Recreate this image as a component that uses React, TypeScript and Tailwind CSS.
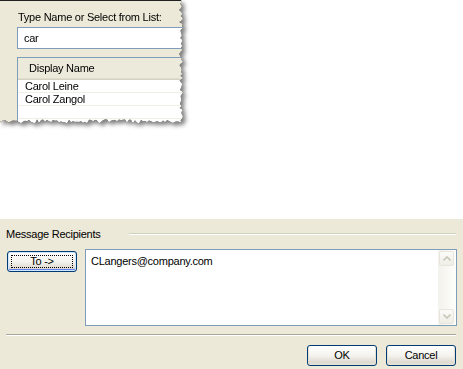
import React from 'react';

// pseudo-random jitter so the torn edge is the same on every render
const noise = (i: number) => {
  const s = Math.sin(i * 12.9898 + 78.233) * 43758.5453;
  return s - Math.floor(s);
};

function tornEdge(right: number, bottom: number) {
  const pts: string[] = ['0px 0px', `${right}px 0px`];
  for (let y = 2; y < bottom; y += 2) {
    pts.push(`${(right + (noise(y) - 0.5) * 4).toFixed(1)}px ${y}px`);
  }
  for (let x = right; x > 0; x -= 2) {
    pts.push(`${x}px ${(bottom + (noise(x + 500) - 0.5) * 4).toFixed(1)}px`);
  }
  pts.push(`0px ${bottom}px`);
  return `polygon(${pts.join(',')})`;
}

function XpButton({ label, focused = false }: { label: string; focused?: boolean }) {
  return (
    <button
      className={
        'relative w-[70px] h-[21px] rounded-[3px] border border-[#003C74] bg-gradient-to-b from-white via-[#F4F3EE] to-[#D6D0C5] text-[11px] text-black leading-none ' +
        (focused ? 'shadow-[inset_0_0_0_1px_#CEE7FF,inset_0_-1px_0_1px_#6982EE]' : 'shadow-[inset_0_-1px_0_1px_#E3E0D6]')
      }
    >
      {focused && <span className="absolute inset-[3px] border border-dotted border-black" />}
      <span className="relative">{label}</span>
    </button>
  );
}

function ScrollArrow({ up }: { up?: boolean }) {
  return (
    <div className="h-[15px] rounded-[2px] border border-[#E8E6DC] bg-gradient-to-b from-[#FBFBF8] to-[#EEEDE6] flex items-center justify-center">
      <svg width="8" height="5" viewBox="0 0 8 5">
        <path
          d={up ? 'M0.5 4.5 L4 1 L7.5 4.5' : 'M0.5 0.5 L4 4 L7.5 0.5'}
          fill="none"
          stroke="#C9C7BA"
          strokeWidth="1.6"
        />
      </svg>
    </div>
  );
}

export default function App() {
  return (
    <div className="w-[463px] h-[369px] bg-white font-['Liberation_Sans',Arial,sans-serif] text-[11px] tracking-[-0.25px] text-black">
      {/* torn clipping of the name picker */}
      <div className="h-[219px]">
        <div className="w-[190px] [filter:drop-shadow(0_0_0.6px_#000)_drop-shadow(3px_3px_2px_rgba(0,0,0,0.5))]">
          <div
            className="w-[186px] h-[126px] overflow-hidden bg-[#ECE9D8] border-t border-[#222] pl-[17px]"
            style={{ clipPath: tornEdge(181, 121) }}
          >
            <div className="pt-[10px] pl-[1px] leading-[13px]">Type Name or Select from List:</div>
            <div className="mt-[3px] w-[200px] h-[22px] border border-[#7F9DB9] bg-white pl-[6px] leading-[20px]">
              car
            </div>
            <div className="mt-[8px] w-[200px] h-[80px] border border-[#7F9DB9] bg-white">
              <div className="h-[22px] bg-[#EBEADB] pl-[11px] leading-[20px] shadow-[inset_0_-1px_0_#D6D2C2,inset_0_-2px_0_#E2DECD]">
                Display Name
              </div>
              {['Carol Leine', 'Carol Zangol', ''].map((name, i) => (
                <div key={i} className="h-[13px] border-b border-[#F1EFE2] pl-[7px] leading-[12px]">
                  {name}
                </div>
              ))}
            </div>
          </div>
        </div>
      </div>

      {/* message recipients dialog */}
      <div className="h-[150px] bg-[#ECE9D8] pt-[8px] px-[6px]">
        <div className="flex items-center h-[14px]">
          <span className="leading-[14px]">Message Recipients</span>
          <div className="flex-1 ml-[28px] mr-[1px] border-t border-[#D0D0BF] border-b border-b-white" />
        </div>

        <div className="flex mt-[8px]">
          <div className="ml-[1px] mt-[2px]">
            <XpButton label="To ->" focused />
          </div>
          <div className="ml-[8px] w-[372px] h-[77px] border border-[#7F9DB9] bg-white flex">
            <div className="flex-1 pl-[5px] pt-[5px] leading-[13px]">CLangers@company.com</div>
            <div className="w-[18px] p-[1px] pr-[2px] flex flex-col justify-between bg-gradient-to-r from-[#F3F2EC] to-[#FEFEFB]">
              <ScrollArrow up />
              <ScrollArrow />
            </div>
          </div>
        </div>

        <div className="mt-[8px] mr-[1px] border-t border-[#ACA899] border-b border-b-white" />

        <div className="flex justify-end gap-[9px] mt-[9px] pr-[1px]">
          <XpButton label="OK" />
          <XpButton label="Cancel" />
        </div>
      </div>
    </div>
  );
}
